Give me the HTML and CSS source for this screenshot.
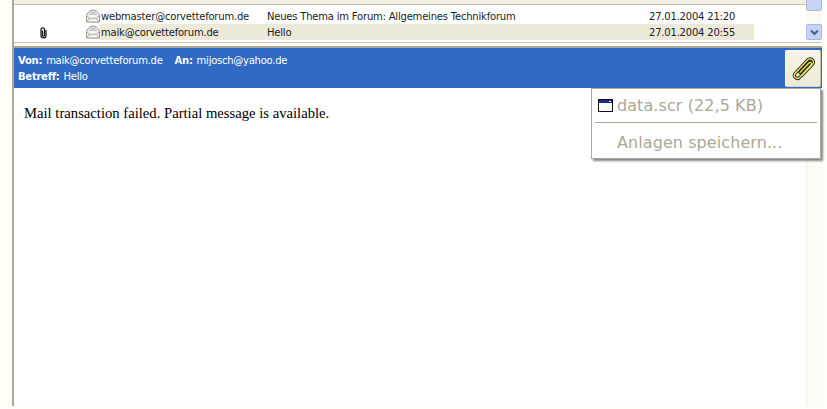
FILE: index.html
```html
<!DOCTYPE html>
<html lang="de">
<head>
<meta charset="utf-8">
<title>Mail</title>
<link rel="stylesheet" href="styles.css">
</head>
<body>
<div class="app">
  <section class="list">
    <div class="rows">
      <div class="row">
        <span class="col-attach"></span>
        <span class="col-icon"><svg width="15" height="14" viewBox="0 0 15 14"><use href="#env"/></svg></span>
        <div class="row-fill">
          <span class="col-from">webmaster@corvetteforum.de</span>
          <span class="col-subject">Neues Thema im Forum: Allgemeines Technikforum</span>
          <span class="col-date">27.01.2004 21:20</span>
        </div>
      </div>
      <div class="row">
        <span class="col-attach"><svg width="7" height="12" viewBox="0 0 7 12"><path d="M2.500 3.500V8.500C2.500 9.500 4.500 9.500 4.500 8.500V2.300C4.500 .4 1 .4 1 2.300V9C1 11.500 6 11.500 6 9V3" fill="none" stroke="#111" stroke-width="1.200"/></svg></span>
        <span class="col-icon"><svg width="15" height="14" viewBox="0 0 15 14"><use href="#env"/></svg></span>
        <div class="row-fill selected">
          <span class="col-from">maik@corvetteforum.de</span>
          <span class="col-subject">Hello</span>
          <span class="col-date">27.01.2004 20:55</span>
        </div>
      </div>
    </div>
    <div class="scrollbar">
      <div class="thumb"></div>
      <div class="arrow"><svg width="9" height="7" viewBox="0 0 9 7"><path d="M1 1.500L4.500 5L8 1.500" fill="none" stroke="#4d6185" stroke-width="2"/></svg></div>
    </div>
  </section>
  <section class="message">
    <header class="head">
      <div class="meta">
        <div><b>Von:</b> <span class="val">maik@corvetteforum.de</span> <b class="to">An:</b> <span class="val">mijosch@yahoo.de</span></div>
        <div><b>Betreff:</b> <span class="val">Hello</span></div>
      </div>
      <button class="clip" type="button"><svg width="25" height="24" viewBox="0 0 25 24"><g fill="none" stroke-linecap="round" stroke-linejoin="round"><path d="M9 15.500L18 6C19.500 4.500 21.500 6.500 20 8L8.500 20.500C6 23 1.500 19.500 4 16.500L16.500 3C19.500 0 24.500 4 21.500 7.500L11 18.500" stroke="#26260c" stroke-width="3.200"/><path d="M9 15.500L18 6C19.500 4.500 21.500 6.500 20 8L8.500 20.500C6 23 1.500 19.500 4 16.500L16.500 3C19.500 0 24.500 4 21.500 7.500L11 18.500" stroke="#e9e36a" stroke-width="1.300"/></g></svg></button>
    </header>
    <div class="body">Mail transaction failed. Partial message is available.</div>
    <div class="body-strip"></div>
    <div class="menu">
      <div class="menu-item"><svg width="15" height="13" viewBox="0 0 15 13"><rect x=".5" y=".5" width="14" height="12" fill="#fff" stroke="#111"/><rect x="1" y="1" width="13" height="3" fill="#1c2a8c"/><rect x="11" y="2" width="2" height="1" fill="#fff"/></svg><span>data.scr (22,5 KB)</span></div>
      <hr class="menu-sep">
      <div class="menu-item save">Anlagen speichern...</div>
    </div>
  </section>
</div>
<svg class="defs" width="0" height="0"><defs><g id="env"><path d="M.5 6C2 2.500 5 .5 7.500 .5S13 2.500 14.500 6V13.500H.5Z" fill="#f4f4f0" stroke="#8a8a88"/><path d="M.5 6.500L4 9.500H11L14.500 6.500M1 13L4 9.500M14 13L11 9.500M3 5H12M4.500 3H10.500" fill="none" stroke="#a5a5a3"/></g></defs></svg>
</body>
</html>
```
FILE: styles.css
```css
html, body {
  margin: 0;
  height: 100%;
  background: #fefdf8;
  overflow: hidden;
}
.defs { position: absolute; }
.app {
  height: 406px;
  margin-left: 12px;
  margin-right: 5px;
  display: flex;
  flex-direction: column;
  border-left: 2px solid #aca899;
  font-family: "DejaVu Sans", sans-serif;
}
.list {
  height: 43px;
  flex: none;
  display: flex;
  background: #fff;
  border-top: 4px solid #f1efe3;
  box-sizing: border-box;
  border-bottom: 1px solid #c9c6b6;
  box-shadow: inset 0 1px #c4c1ad;
  position: relative;
}
.rows {
  flex: 1;
  padding-top: 4px;
}
.row {
  height: 16px;
  display: flex;
  align-items: center;
  font-size: 10px;
  color: #222;
}
.col-attach {
  padding-left: 26px;
  display: flex;
  flex: none;
  width: 46px;
}
.col-attach svg { margin-top: 1px; }
.col-icon { width: 14px; flex: none; display: flex; }
.row-fill {
  flex: none;
  width: 654px;
  height: 16px;
  display: flex;
  align-items: center;
  box-sizing: border-box;
}
.selected { background: #ece9d8; }
.col-from { width: 167px; padding-left: 1px; box-sizing: border-box; flex: none; letter-spacing: -.02em; }
.col-subject { width: 382px; flex: none; letter-spacing: -.02em; }
.col-date { flex: none; letter-spacing: -.02em; }
.scrollbar {
  width: 16px;
  margin-left: auto;
  margin-top: -4px;
  display: flex;
  flex-direction: column;
  justify-content: space-between;
  background: #fafaf5;
  padding-bottom: 2px;
}
.thumb {
  height: 11px;
  background: #c6d4f5;
  border: 1px solid #a9b9dc;
  border-top: none;
  border-radius: 0 0 3px 3px;
  box-sizing: border-box;
}
.arrow {
  height: 16px;
  background: #c3d3f8;
  border: 1px solid #a9b9dc;
  border-radius: 2px;
  box-sizing: border-box;
  display: flex;
  align-items: center;
  justify-content: center;
}
.message {
  flex: 1;
  margin-top: 3px;
  border-top: 2px solid #aca899;
  display: flex;
  flex-direction: column;
  position: relative;
  background: #fff;
}
.head {
  height: 40px;
  flex: none;
  background: #316ac5;
  color: #fff;
  display: flex;
  justify-content: space-between;
  padding: 5px 1px 0 4px;
  box-sizing: border-box;
  font-size: 10px;
  line-height: 16px;
  letter-spacing: -.025em;
}
.val { margin-left: 1px; }
.to { margin-left: 9px; }
.clip {
  width: 36px;
  height: 37px;
  margin-top: -3px;
  padding: 0;
  background: linear-gradient(#f6f4ea, #ece9d8);
  border: 1px solid #fbfaf3;
  border-bottom-color: #d8d5c4;
  border-right-color: #c4c1ad;
  border-radius: 2px;
  display: flex;
  align-items: center;
  justify-content: center;
}
.body {
  font-family: "Liberation Serif", serif;
  font-size: 14.67px;
  color: #000;
  padding: 17px 0 0 10px;
}
.body-strip {
  position: absolute;
  right: 0;
  top: 40px;
  bottom: 0;
  width: 16px;
  background: #fcfcf6;
  border-left: 1px solid #f0f0e8;
  box-sizing: border-box;
}
.menu {
  position: absolute;
  right: 1px;
  top: 40px;
  width: 230px;
  height: 71px;
  box-sizing: border-box;
  background: #fff;
  border: 1px solid #aca899;
  box-shadow: 2px 2px 2px #888;
  color: #aca899;
  font-size: 16px;
  letter-spacing: .08px;
  padding: 0 3px;
  z-index: 2;
}
.menu-item {
  height: 32px;
  display: flex;
  align-items: center;
  gap: 4px;
  padding-left: 3px;
}
.menu-sep {
  margin: 1px 0 0;
  border: none;
  border-top: 1px solid #aca899;
}
.save { padding-left: 22px; height: 38px; }
```
